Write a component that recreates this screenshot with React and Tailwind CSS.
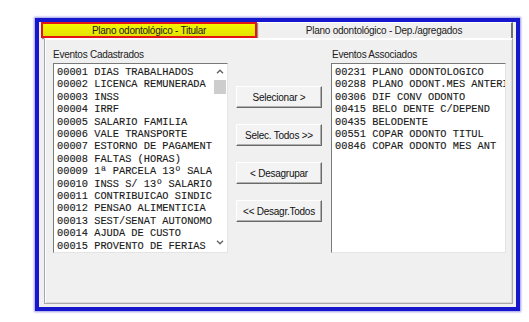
import React from "react";

const left = [
  "00001 DIAS TRABALHADOS",
  "00002 LICENCA REMUNERADA",
  "00003 INSS",
  "00004 IRRF",
  "00005 SALARIO FAMILIA",
  "00006 VALE TRANSPORTE",
  "00007 ESTORNO DE PAGAMENT",
  "00008 FALTAS (HORAS)",
  "00009 1ª PARCELA 13º SALA",
  "00010 INSS S/ 13º SALARIO",
  "00011 CONTRIBUICAO SINDIC",
  "00012 PENSAO ALIMENTICIA",
  "00013 SEST/SENAT AUTONOMO",
  "00014 AJUDA DE CUSTO",
  "00015 PROVENTO DE FERIAS",
];

const right = [
  "00231 PLANO ODONTOLOGICO",
  "00288 PLANO ODONT.MES ANTERIOR",
  "00306 DIF CONV ODONTO",
  "00415 BELO DENTE C/DEPEND",
  "00435 BELODENTE",
  "00551 COPAR ODONTO TITUL",
  "00846 COPAR ODONTO MES ANT",
];

const sans = { fontFamily: '"Liberation Sans", Arial, sans-serif' };
const mono = { fontFamily: '"Liberation Mono", "Courier New", monospace' };

function Btn({ children }) {
  return (
    <div className="h-[22px] w-[86px] flex items-center justify-center bg-[#f3f3f3] border border-t-white border-l-white border-r-[#6a6a6a] border-b-[#6a6a6a] shadow-[inset_-1px_-1px_0_#b0b0b0] text-[10px] tracking-[-0.25px] text-[#111]">
      {children}
    </div>
  );
}

function Rows({ items }) {
  return (
    <div className="pl-[3px] pt-[2px] text-[10.33px] leading-[12.4px] text-[#1a1a1a] [-webkit-text-stroke:0.12px_#1a1a1a] whitespace-pre overflow-hidden" style={mono}>
      {items.map((t) => (
        <div key={t}>{t}</div>
      ))}
    </div>
  );
}

export default function App() {
  return (
    <div className="w-[529px] h-[322px] bg-white pt-[18px] pl-[35px]" style={sans}>
      <div className="w-[485px] h-[293px] border-4 border-[#1616cc] shadow-[0_0_2px_1px_#9a9ae8] bg-[#f0f0f0] flex flex-col px-[2px] pb-[3px]">
        {/* tabs */}
        <div className="h-[16px] flex shrink-0">
          <div className="w-[216px] h-[16px] border-2 border-[#e41414] bg-gradient-to-b from-[#f6f600] to-[#e2e200] flex items-center justify-center text-[10px] tracking-[-0.25px] text-[#202020] shadow-[1px_1px_1px_#909090]">
            Plano odontológico - Titular
          </div>
          <div className="flex-1 h-[16px] mr-[1px] border-t border-t-white border-r-2 border-r-[#707070] flex items-center justify-center text-[10px] tracking-[-0.25px] text-[#202020]">
            Plano odontológico - Dep./agregados
          </div>
        </div>
        {/* panel */}
        <div className="flex-1 ml-[3px] mr-[1px] border border-t-white border-l-[#a8a8a8] border-r-[#a8a8a8] border-b-[#a8a8a8] shadow-[inset_1px_1px_0_#ffffff,inset_-1px_-1px_0_#dadada] flex pl-[8px] pt-[10px] gap-[8px]">
          {/* left column */}
          <div className="w-[175px] flex flex-col">
            <div className="h-[12px] leading-[12px] text-[10px] tracking-[-0.25px] text-[#202020] mb-[2px]">
              Eventos Cadastrados
            </div>
            <div className="h-[190px] bg-white border border-t-[#7a7a7a] border-l-[#7a7a7a] border-r-[#e4e4e4] border-b-[#e4e4e4] flex">
              <div className="flex-1 overflow-hidden">
                <Rows items={left} />
              </div>
              <div className="w-[15px] flex flex-col items-center">
                <div className="h-[15px] flex items-center justify-center">
                  <svg width="8" height="5" viewBox="0 0 8 5">
                    <path d="M1 4.2 L4 1.2 L7 4.2" fill="none" stroke="#606060" strokeWidth="1.3" />
                  </svg>
                </div>
                <div className="w-[12px] h-[14px] bg-[#cdcdcd] mt-[1px]" />
                <div className="flex-1" />
                <div className="h-[15px] flex items-center justify-center mb-[2px]">
                  <svg width="8" height="5" viewBox="0 0 8 5">
                    <path d="M1 0.8 L4 3.8 L7 0.8" fill="none" stroke="#606060" strokeWidth="1.3" />
                  </svg>
                </div>
              </div>
            </div>
          </div>
          {/* buttons */}
          <div className="w-[86px] flex flex-col gap-[16px] pt-[37px]">
            <Btn>Selecionar &gt;</Btn>
            <Btn>Selec. Todos &gt;&gt;</Btn>
            <Btn>&lt; Desagrupar</Btn>
            <Btn>&lt;&lt; Desagr.Todos</Btn>
          </div>
          {/* right column */}
          <div className="w-[175px] flex flex-col ml-[1px]">
            <div className="h-[12px] leading-[12px] text-[10px] tracking-[-0.25px] text-[#202020] mb-[2px] pl-[1px]">
              Eventos Associados
            </div>
            <div className="h-[190px] bg-white border border-t-[#7a7a7a] border-l-[#7a7a7a] border-r-[#e4e4e4] border-b-[#e4e4e4] overflow-hidden">
              <Rows items={right} />
            </div>
          </div>
        </div>
      </div>
    </div>
  );
}
